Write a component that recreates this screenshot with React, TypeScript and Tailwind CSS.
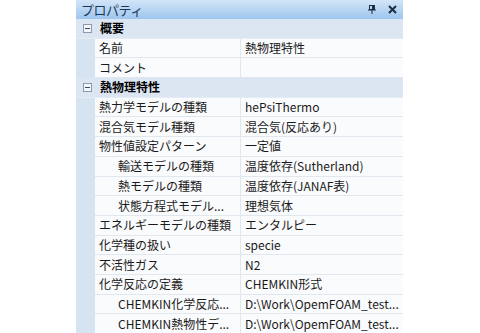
import React from 'react';

type Row =
    | {kind: 'group'; label: string}
    | {kind: 'prop'; label: string; value: string; indent?: boolean};

const rows: Row[] = [
    {kind: 'group', label: '概要'},
    {kind: 'prop', label: '名前', value: '熱物理特性'},
    {kind: 'prop', label: 'コメント', value: ''},
    {kind: 'group', label: '熱物理特性'},
    {kind: 'prop', label: '熱力学モデルの種類', value: 'hePsiThermo'},
    {kind: 'prop', label: '混合気モデル種類', value: '混合気(反応あり)'},
    {kind: 'prop', label: '物性値設定パターン', value: '一定値'},
    {kind: 'prop', label: '輸送モデルの種類', value: '温度依存(Sutherland)', indent: true},
    {kind: 'prop', label: '熱モデルの種類', value: '温度依存(JANAF表)', indent: true},
    {kind: 'prop', label: '状態方程式モデル...', value: '理想気体', indent: true},
    {kind: 'prop', label: 'エネルギーモデルの種類', value: 'エンタルピー'},
    {kind: 'prop', label: '化学種の扱い', value: 'specie'},
    {kind: 'prop', label: '不活性ガス', value: 'N2'},
    {kind: 'prop', label: '化学反応の定義', value: 'CHEMKIN形式'},
    {kind: 'prop', label: 'CHEMKIN化学反応...', value: 'D:\\Work\\OpemFOAM_test...', indent: true},
    {kind: 'prop', label: 'CHEMKIN熱物性デ...', value: 'D:\\Work\\OpemFOAM_test...', indent: true},
];

function CollapseBox() {
    return (
        <div className="w-[9px] h-[9px] border border-[#8a99ab] bg-[#f3f6fa] flex items-center justify-center">
            <div className="w-[5px] h-px bg-[#3a4a5c]" />
        </div>
    );
}

function App() {
    return (
        <div className="w-[480px] h-[333px] bg-white overflow-hidden" style={{fontFamily: '"Noto Sans CJK JP", "Noto Sans", sans-serif'}}>
            <div className="ml-[76px] w-[327px] h-full flex flex-col">
                {/* title bar */}
                <div className="h-[19px] shrink-0 flex items-center justify-between pl-[5px] pr-[6px] bg-gradient-to-b from-[#d3e5f8] to-[#9dc6ee]">
                    <span className="text-[13px] leading-none text-[#1b3557] tracking-[-0.5px]">プロパティ</span>
                    <div className="flex items-center gap-[12px]">
                        <svg width="8" height="9" viewBox="0 0 8 9">
                            <rect x="1.5" y="0.5" width="5" height="4" fill="none" stroke="#1b2d44" strokeWidth="1" />
                            <rect x="4" y="1" width="2" height="3.5" fill="#1b2d44" />
                            <rect x="0" y="4.5" width="8" height="1" fill="#1b2d44" />
                            <rect x="3.5" y="5" width="1" height="4" fill="#1b2d44" />
                        </svg>
                        <svg width="9" height="9" viewBox="0 0 9 9">
                            <path d="M1 1 L8 8 M8 1 L1 8" stroke="#1b2d44" strokeWidth="2" />
                        </svg>
                    </div>
                </div>
                {/* grid */}
                <div className="flex-1 bg-[#d6e3f1]">
                    {rows.map((row, i) =>
                        row.kind === 'group' ? (
                            <div key={i} className="h-[19.7px] flex items-center bg-[#dce6f2] border-b border-[#e6ecf3]">
                                <div className="w-[20px] flex justify-center pl-[2px]">
                                    <CollapseBox />
                                </div>
                                <span className="pl-[4px] text-[12px] font-bold text-black leading-none">{row.label}</span>
                            </div>
                        ) : (
                            <div key={i} className="h-[19.7px] flex">
                                <div className="w-[19px] shrink-0" />
                                <div
                                    className={`w-[146px] shrink-0 flex items-center bg-[#fafbfd] border-b border-r border-[#e1e7ee] text-[12px] text-[#1a1a1a] whitespace-nowrap overflow-hidden ${row.indent ? 'pl-[23px]' : 'pl-[4px]'}`}
                                >
                                    {row.label}
                                </div>
                                <div className="flex-1 flex items-center bg-[#fafbfd] border-b border-[#e1e7ee] pl-[4px] text-[12px] text-[#1a1a1a] whitespace-nowrap overflow-hidden">
                                    {row.value}
                                </div>
                            </div>
                        )
                    )}
                </div>
            </div>
        </div>
    );
}

export default App;
